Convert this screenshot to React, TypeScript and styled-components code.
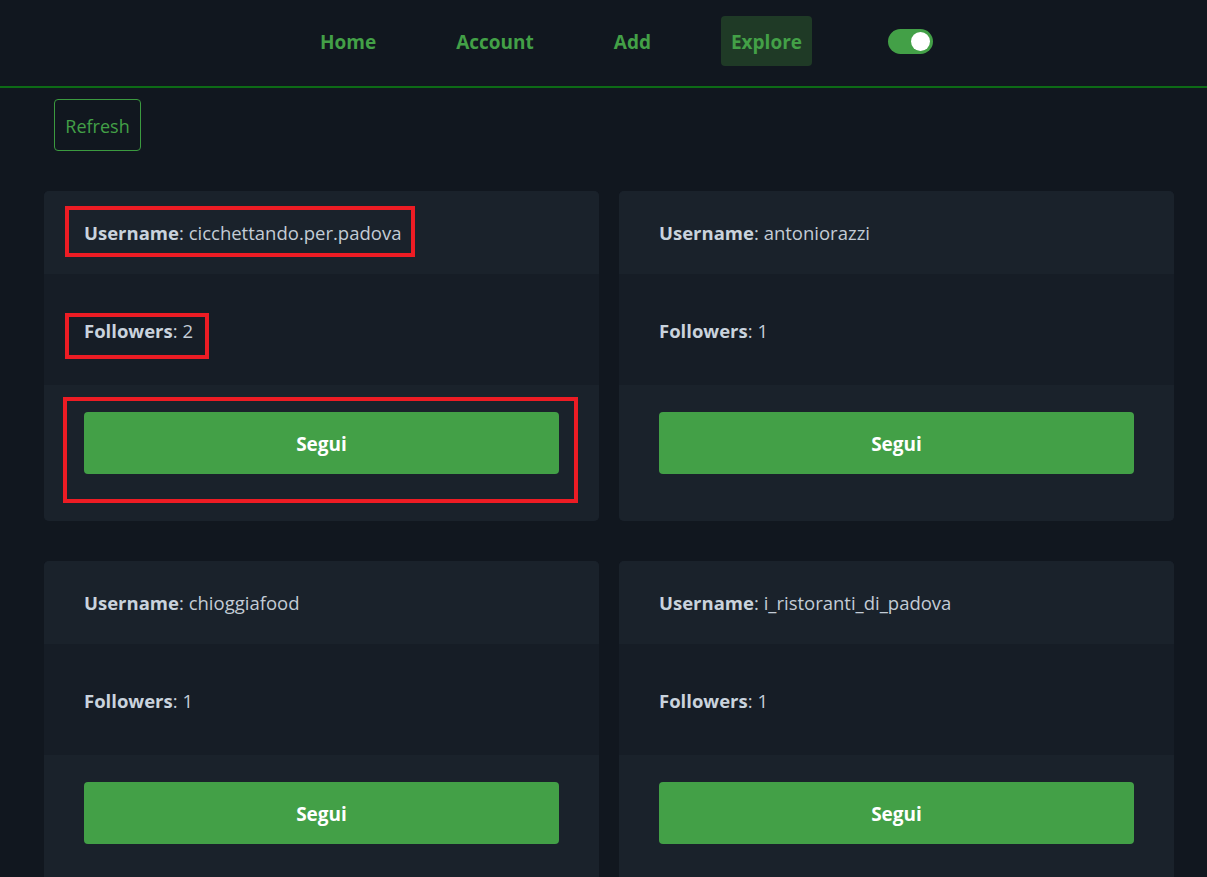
import React from "react";
import styled, { createGlobalStyle } from "styled-components";

const GlobalStyle = createGlobalStyle`
  html, body {
    margin: 0;
    padding: 0;
    background: #11171f;
    font-family: "Open Sans", "Noto Sans", "Liberation Sans", sans-serif;
  }
  * { box-sizing: border-box; }
`;

const Page = styled.div`
  min-height: 877px;
  background: #11171f;
  overflow: hidden;
`;

const Nav = styled.nav`
  height: 88px;
  border-bottom: 2px solid #0d6b16;
  display: flex;
  align-items: center;
  justify-content: center;
  padding-left: 36px;
  padding-bottom: 4px;
  gap: 60px;
`;

const NavItem = styled.a<{ $active?: boolean }>`
  display: flex;
  align-items: center;
  height: 50px;
  padding: 2px 10px 0;
  border-radius: 4px;
  font-size: 19px;
  font-weight: 700;
  color: #43a047;
  text-decoration: none;
  background: ${(p) => (p.$active ? "#1f3a26" : "transparent")};
`;

const Toggle = styled.div`
  width: 45px;
  height: 25px;
  margin-left: 16px;
  border-radius: 13px;
  background: #43a047;
  display: flex;
  align-items: center;
  justify-content: flex-end;
  padding-right: 3px;
`;

const Knob = styled.div`
  width: 19px;
  height: 19px;
  border-radius: 50%;
  background: #ffffff;
`;

const Main = styled.main`
  padding: 11px 33px 0 44px;
`;

const RefreshButton = styled.button`
  margin-left: 10px;
  width: 87px;
  height: 52px;
  border: 1px solid #3b9a3f;
  border-radius: 4px;
  background: transparent;
  color: #43a047;
  font-family: inherit;
  font-size: 18px;
  font-weight: 400;
  padding: 2px 0 0;
  cursor: pointer;
`;

const Grid = styled.div`
  margin-top: 40px;
  display: grid;
  grid-template-columns: 1fr 1fr;
  column-gap: 20px;
  row-gap: 40px;
`;

const Card = styled.div`
  position: relative;
  border-radius: 5px;
  background: #1a222b;
`;

const CardHeader = styled.div`
  height: 83px;
  padding: 0 40px;
  display: flex;
  align-items: center;
  background: #1a222b;
  border-radius: 5px 5px 0 0;
`;

const CardBody = styled.div`
  height: 111px;
  padding: 2px 40px 0;
  display: flex;
  align-items: center;
  background: #161d26;
`;

const CardFooter = styled.div`
  height: 136px;
  padding: 27px 40px 47px;
  background: #1a222b;
  border-radius: 0 0 5px 5px;
`;

const Field = styled.div`
  font-size: 18.5px;
  color: #c3ccd6;
  white-space: nowrap;
`;

const Label = styled.b`
  font-weight: 700;
  color: #c9d3dd;
`;

const FollowButton = styled.button`
  width: 100%;
  height: 62px;
  border: none;
  border-radius: 4px;
  padding: 2px 0 0;
  background: #43a047;
  color: #ffffff;
  font-family: inherit;
  font-size: 19px;
  font-weight: 700;
  cursor: pointer;
`;

const Highlight = styled.div<{ $top: number; $left: number; $w: number; $h: number }>`
  position: absolute;
  top: ${(p) => p.$top}px;
  left: ${(p) => p.$left}px;
  width: ${(p) => p.$w}px;
  height: ${(p) => p.$h}px;
  border: 4px solid #ed1c24;
  pointer-events: none;
`;

const users = [
  { name: "cicchettando.per.padova", followers: 2, marked: true },
  { name: "antoniorazzi", followers: 1 },
  { name: "chioggiafood", followers: 1 },
  { name: "i_ristoranti_di_padova", followers: 1 },
];

export default function App() {
  return (
    <Page>
      <GlobalStyle />
      <Nav>
        <NavItem>Home</NavItem>
        <NavItem>Account</NavItem>
        <NavItem>Add</NavItem>
        <NavItem $active>Explore</NavItem>
        <Toggle>
          <Knob />
        </Toggle>
      </Nav>
      <Main>
        <RefreshButton>Refresh</RefreshButton>
        <Grid>
          {users.map((u) => (
            <Card key={u.name}>
              <CardHeader>
                <Field>
                  <Label>Username</Label>: {u.name}
                </Field>
              </CardHeader>
              <CardBody>
                <Field>
                  <Label>Followers</Label>: {u.followers}
                </Field>
              </CardBody>
              <CardFooter>
                <FollowButton>Segui</FollowButton>
              </CardFooter>
              {u.marked && (
                <>
                  <Highlight $top={15} $left={21} $w={350} $h={51} />
                  <Highlight $top={122} $left={21} $w={144} $h={46} />
                  <Highlight $top={206} $left={19} $w={515} $h={106} />
                </>
              )}
            </Card>
          ))}
        </Grid>
      </Main>
    </Page>
  );
}
